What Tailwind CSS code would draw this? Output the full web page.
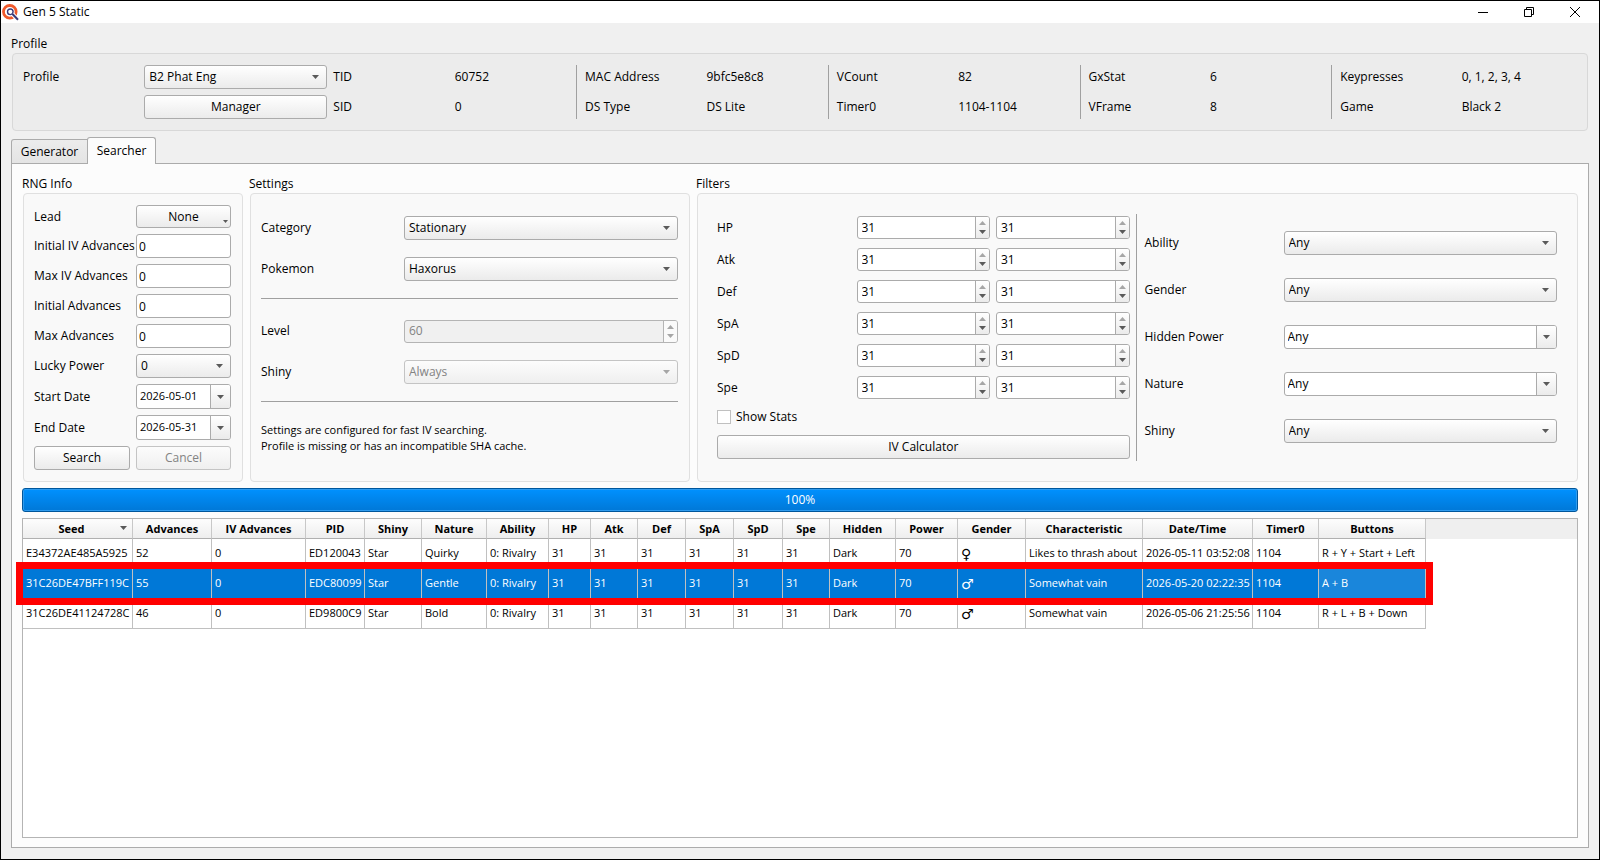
<!DOCTYPE html>
<html lang="en">
<head>
  <meta charset="UTF-8" />
  <meta name="viewport" content="width=device-width, initial-scale=1.0" />
  <title>Gen 5 Static</title>
  <script src="https://cdn.jsdelivr.net/npm/@tailwindcss/browser@4"></script>
</head>
<body class="min-h-screen flex flex-col bg-[#f0f0f0] border border-black font-['Open_Sans','Noto_Sans',sans-serif] text-xs text-black">
  <!-- Title bar -->
  <header class="flex items-center h-[22px] bg-white pl-px pr-px">
    <svg class="w-[17px] h-[17px]" viewBox="0 0 17 17" fill="none">
      <circle cx="7.8" cy="7.8" r="6.3" fill="#fff" stroke="#f0592b" stroke-width="2.8" />
      <circle cx="8.3" cy="7.8" r="2.8" fill="#fff" stroke="#3b3a78" stroke-width="1.4" />
      <path d="M10.4 10l5.6 5.8" stroke="#fff" stroke-width="4" />
      <path d="M10.2 9.8l5.8 6" stroke="#3b3a78" stroke-width="2" />
    </svg>
    <h1 class="ml-1">Gen 5 Static</h1>
    <div class="ml-auto flex">
      <button aria-label="Minimize" class="w-[46px] h-[22px] flex justify-center items-center">
        <svg class="w-[10px] h-[10px]" viewBox="0 0 10 10" stroke="#000"><path d="M0 5.5h10" /></svg>
      </button>
      <button aria-label="Restore" class="w-[46px] h-[22px] flex justify-center items-center">
        <svg class="w-[10px] h-[10px]" viewBox="0 0 10 10" fill="none" stroke="#000"><path d="M.5 2.5h7v7h-7zM2.5 2.5v-2h7v7h-2" /></svg>
      </button>
      <button aria-label="Close" class="w-[46px] h-[22px] flex justify-center items-center">
        <svg class="w-[10px] h-[10px]" viewBox="0 0 10 10" stroke="#000"><path d="M0 0l10 10M10 0L0 10" /></svg>
      </button>
    </div>
  </header>

  <main class="flex-1 flex flex-col px-[10px] pt-3 pb-[11px]">
    <!-- Profile -->
    <h2 class="h-[18px] leading-[18px]">Profile</h2>
    <section class="grid grid-cols-[1fr_183px_1fr_1fr_3px_1fr_1fr_3px_1fr_1fr_3px_1fr_1fr_3px_1fr_1fr] grid-rows-[24px_24px] gap-[6px] items-center mx-px bg-[#ececec] border border-[#d8d8d8] rounded-sm px-[10px] py-[11px]">
      <label for="profile">Profile</label>
      <div class="relative">
        <select id="profile" class="appearance-none w-full h-6 pl-1 rounded-[3px] border border-[#ababab] bg-linear-to-b from-white to-[#ebebeb]"><option>B2 Phat Eng</option></select>
        <svg class="absolute right-2 top-[10px] w-[7px] h-1 pointer-events-none" viewBox="0 0 7 4"><path d="M0 0h7L3.5 4z" fill="#5a5a5a" /></svg>
      </div>
      <span>TID</span><span>60752</span>
      <div class="row-span-2 h-full border-l border-[#a0a0a0]"></div>
      <span>MAC Address</span><span>9bfc5e8c8</span>
      <div class="row-span-2 h-full border-l border-[#a0a0a0]"></div>
      <span>VCount</span><span>82</span>
      <div class="row-span-2 h-full border-l border-[#a0a0a0]"></div>
      <span>GxStat</span><span>6</span>
      <div class="row-span-2 h-full border-l border-[#a0a0a0]"></div>
      <span>Keypresses</span><span>0, 1, 2, 3, 4</span>

      <button class="col-start-2 h-6 rounded-[3px] border border-[#ababab] bg-linear-to-b from-white to-[#ebebeb]">Manager</button>
      <span>SID</span><span>0</span>
      <span>DS Type</span><span>DS Lite</span>
      <span>Timer0</span><span>1104-1104</span>
      <span>VFrame</span><span>8</span>
      <span>Game</span><span>Black 2</span>
    </section>

    <!-- Tabs -->
    <div role="tablist" class="flex items-end mt-[6px] h-[26px]">
      <button role="tab" class="h-6 w-[77px] border border-b-0 border-[#ababab] rounded-tl-[3px] bg-linear-to-b from-[#ececec] to-[#e4e4e4]">Generator</button>
      <button role="tab" aria-selected="true" class="relative z-10 h-[27px] w-[69px] -mb-px -ml-px border border-b-0 border-[#ababab] rounded-t-[3px] bg-[#fcfcfc]">Searcher</button>
    </div>

    <section class="flex-1 flex flex-col bg-[#fcfcfc] border border-[#ababab] px-[10px] pt-[10px] pb-[9px]">
      <div class="grid grid-cols-[221px_1fr_2fr] gap-x-[6px]">
        <!-- RNG Info -->
        <div class="flex flex-col">
          <h2 class="h-[19px] leading-[19px]">RNG Info</h2>
          <div class="flex-1 grid grid-cols-[96px_95px] content-start gap-[6px] items-center ml-px bg-[#f9f9f9] border border-[#e0e0e0] rounded-sm pl-[10px] py-[11px]">
            <label for="lead">Lead</label>
            <button id="lead" class="relative h-[23px] rounded-[3px] border border-[#ababab] bg-linear-to-b from-white to-[#ebebeb]">
              None
              <svg class="absolute right-[2px] bottom-1 w-[5px] h-[3px]" viewBox="0 0 5 3"><path d="M0 0h5L2.5 3z" fill="#5a5a5a" /></svg>
            </button>
            <label for="initial-iv" class="whitespace-nowrap">Initial IV Advances</label>
            <input id="initial-iv" type="text" value="0" class="w-full h-6 px-[2px] rounded-[3px] border border-[#ababab] bg-white">
            <label for="max-iv" class="whitespace-nowrap">Max IV Advances</label>
            <input id="max-iv" type="text" value="0" class="w-full h-6 px-[2px] rounded-[3px] border border-[#ababab] bg-white">
            <label for="initial-adv">Initial Advances</label>
            <input id="initial-adv" type="text" value="0" class="w-full h-6 px-[2px] rounded-[3px] border border-[#ababab] bg-white">
            <label for="max-adv">Max Advances</label>
            <input id="max-adv" type="text" value="0" class="w-full h-6 px-[2px] rounded-[3px] border border-[#ababab] bg-white">
            <label for="lucky">Lucky Power</label>
            <div class="relative">
              <select id="lucky" class="appearance-none w-full h-6 pl-1 rounded-[3px] border border-[#ababab] bg-linear-to-b from-white to-[#ebebeb]"><option>0</option></select>
              <svg class="absolute right-2 top-[10px] w-[7px] h-1 pointer-events-none" viewBox="0 0 7 4"><path d="M0 0h7L3.5 4z" fill="#5a5a5a" /></svg>
            </div>
            <label for="start-date">Start Date</label>
            <div class="flex h-[25px] rounded-[3px] border border-[#ababab] bg-white overflow-hidden">
              <input id="start-date" type="text" value="2026-05-01" class="flex-1 min-w-0 pl-[3px] text-[11px]">
              <button aria-label="Pick start date" class="w-5 flex justify-center items-center border-l border-[#ababab] bg-linear-to-b from-white to-[#ebebeb]">
                <svg class="w-[7px] h-1" viewBox="0 0 7 4"><path d="M0 0h7L3.5 4z" fill="#5a5a5a" /></svg>
              </button>
            </div>
            <label for="end-date">End Date</label>
            <div class="flex h-[25px] rounded-[3px] border border-[#ababab] bg-white overflow-hidden">
              <input id="end-date" type="text" value="2026-05-31" class="flex-1 min-w-0 pl-[3px] text-[11px]">
              <button aria-label="Pick end date" class="w-5 flex justify-center items-center border-l border-[#ababab] bg-linear-to-b from-white to-[#ebebeb]">
                <svg class="w-[7px] h-1" viewBox="0 0 7 4"><path d="M0 0h7L3.5 4z" fill="#5a5a5a" /></svg>
              </button>
            </div>
            <button class="h-6 rounded-[3px] border border-[#ababab] bg-linear-to-b from-white to-[#ebebeb]">Search</button>
            <button disabled class="h-6 rounded-[3px] border border-[#c4c4c4] bg-linear-to-b from-[#fcfcfc] to-[#efefef] text-[#838383]">Cancel</button>
          </div>
        </div>

        <!-- Settings -->
        <div class="flex flex-col">
          <h2 class="h-[19px] leading-[19px]">Settings</h2>
          <div class="flex-1 flex flex-col gap-[17px] ml-px bg-[#f9f9f9] border border-[#e0e0e0] rounded-sm pl-[10px] pr-[11px] pt-[22px]">
            <div class="grid grid-cols-[1fr_2fr] gap-[6px] items-center">
              <label for="category">Category</label>
              <div class="relative">
                <select id="category" class="appearance-none w-full h-6 pl-1 rounded-[3px] border border-[#ababab] bg-linear-to-b from-white to-[#ebebeb]"><option>Stationary</option></select>
                <svg class="absolute right-2 top-[10px] w-[7px] h-1 pointer-events-none" viewBox="0 0 7 4"><path d="M0 0h7L3.5 4z" fill="#5a5a5a" /></svg>
              </div>
            </div>
            <div class="grid grid-cols-[1fr_2fr] gap-[6px] items-center">
              <label for="pokemon">Pokemon</label>
              <div class="relative">
                <select id="pokemon" class="appearance-none w-full h-6 pl-1 rounded-[3px] border border-[#ababab] bg-linear-to-b from-white to-[#ebebeb]"><option>Haxorus</option></select>
                <svg class="absolute right-2 top-[10px] w-[7px] h-1 pointer-events-none" viewBox="0 0 7 4"><path d="M0 0h7L3.5 4z" fill="#5a5a5a" /></svg>
              </div>
            </div>
            <hr class="h-1 border-[#a0a0a0]">
            <div class="h-6 grid grid-cols-[1fr_2fr] gap-[6px] items-center">
              <label for="level">Level</label>
              <div class="flex h-[23px] rounded-[3px] border border-[#b4b4b4] bg-[#f0f0f0] overflow-hidden">
                <input id="level" type="number" value="60" disabled class="flex-1 min-w-0 pl-1 text-[#838383] [appearance:textfield]">
                <div class="w-[14px] flex flex-col justify-center items-center gap-[5px] border-l border-[#b4b4b4] bg-[#fafafa]">
                  <svg class="w-[7px] h-1" viewBox="0 0 7 4"><path d="M0 4h7L3.5 0z" fill="#a6a6a6" /></svg>
                  <svg class="w-[7px] h-1" viewBox="0 0 7 4"><path d="M0 0h7L3.5 4z" fill="#a6a6a6" /></svg>
                </div>
              </div>
            </div>
            <div class="grid grid-cols-[1fr_2fr] gap-[6px] items-center">
              <label for="set-shiny">Shiny</label>
              <div class="relative">
                <select id="set-shiny" disabled class="appearance-none w-full h-6 pl-1 rounded-[3px] border border-[#c4c4c4] bg-linear-to-b from-[#fcfcfc] to-[#efefef] text-[#838383] opacity-100"><option>Always</option></select>
                <svg class="absolute right-2 top-[10px] w-[7px] h-1 pointer-events-none" viewBox="0 0 7 4"><path d="M0 0h7L3.5 4z" fill="#a6a6a6" /></svg>
              </div>
            </div>
            <hr class="h-1 border-[#a0a0a0]">
            <p class="text-[11px] leading-4">Settings are configured for fast IV searching.<br>Profile is missing or has an incompatible SHA cache.</p>
          </div>
        </div>

        <!-- Filters -->
        <div class="flex flex-col">
          <h2 class="h-[19px] leading-[19px]">Filters</h2>
          <div class="flex-1 grid grid-cols-[1fr_3px_1fr] gap-[6px] items-start ml-px bg-[#f9f9f9] border border-[#e0e0e0] rounded-sm pl-[19px] pr-5 py-5">
            <div class="flex flex-col pt-[2px]">
              <div id="stats" class="flex flex-col gap-[9px]"></div>
              <label class="flex items-center gap-[5px] h-[18px] mt-[9px]">
                <input type="checkbox" class="appearance-none w-[14px] h-[14px] border border-[#c0c0c0] bg-white">
                Show Stats
              </label>
              <button class="h-6 mt-[9px] rounded-[3px] border border-[#ababab] bg-linear-to-b from-white to-[#ebebeb]">IV Calculator</button>
            </div>
            <div class="h-full border-l border-[#a0a0a0]"></div>
            <div class="flex flex-col gap-[23px] pt-[17px]">
              <div class="grid grid-cols-[133px_1fr] gap-[6px] items-center">
                <label for="ability">Ability</label>
                <div class="relative">
                  <select id="ability" class="appearance-none w-full h-6 pl-1 rounded-[3px] border border-[#ababab] bg-linear-to-b from-white to-[#ebebeb]"><option>Any</option></select>
                  <svg class="absolute right-2 top-[10px] w-[7px] h-1 pointer-events-none" viewBox="0 0 7 4"><path d="M0 0h7L3.5 4z" fill="#5a5a5a" /></svg>
                </div>
              </div>
              <div class="grid grid-cols-[133px_1fr] gap-[6px] items-center">
                <label for="gender">Gender</label>
                <div class="relative">
                  <select id="gender" class="appearance-none w-full h-6 pl-1 rounded-[3px] border border-[#ababab] bg-linear-to-b from-white to-[#ebebeb]"><option>Any</option></select>
                  <svg class="absolute right-2 top-[10px] w-[7px] h-1 pointer-events-none" viewBox="0 0 7 4"><path d="M0 0h7L3.5 4z" fill="#5a5a5a" /></svg>
                </div>
              </div>
              <div class="grid grid-cols-[133px_1fr] gap-[6px] items-center">
                <label for="hidden-power">Hidden Power</label>
                <div class="flex h-6 rounded-[3px] border border-[#ababab] bg-white overflow-hidden">
                  <input id="hidden-power" type="text" value="Any" class="flex-1 min-w-0 pl-[3px]">
                  <button aria-label="Open hidden power list" class="w-5 flex justify-center items-center border-l border-[#ababab] bg-linear-to-b from-white to-[#ebebeb]">
                    <svg class="w-[7px] h-1" viewBox="0 0 7 4"><path d="M0 0h7L3.5 4z" fill="#5a5a5a" /></svg>
                  </button>
                </div>
              </div>
              <div class="grid grid-cols-[133px_1fr] gap-[6px] items-center">
                <label for="nature">Nature</label>
                <div class="flex h-6 rounded-[3px] border border-[#ababab] bg-white overflow-hidden">
                  <input id="nature" type="text" value="Any" class="flex-1 min-w-0 pl-[3px]">
                  <button aria-label="Open nature list" class="w-5 flex justify-center items-center border-l border-[#ababab] bg-linear-to-b from-white to-[#ebebeb]">
                    <svg class="w-[7px] h-1" viewBox="0 0 7 4"><path d="M0 0h7L3.5 4z" fill="#5a5a5a" /></svg>
                  </button>
                </div>
              </div>
              <div class="grid grid-cols-[133px_1fr] gap-[6px] items-center">
                <label for="shiny">Shiny</label>
                <div class="relative">
                  <select id="shiny" class="appearance-none w-full h-6 pl-1 rounded-[3px] border border-[#ababab] bg-linear-to-b from-white to-[#ebebeb]"><option>Any</option></select>
                  <svg class="absolute right-2 top-[10px] w-[7px] h-1 pointer-events-none" viewBox="0 0 7 4"><path d="M0 0h7L3.5 4z" fill="#5a5a5a" /></svg>
                </div>
              </div>
            </div>
          </div>
        </div>
      </div>

      <!-- Progress -->
      <div role="progressbar" aria-valuenow="100" class="h-6 mt-[6px] flex justify-center items-center rounded-[3px] border border-[#00569b] bg-linear-to-b from-[#0091ff] to-[#0078d7] inset-ring inset-ring-[#2f9bee] text-white">100%</div>

      <!-- Results -->
      <div class="flex-1 mt-[6px] border border-[#b4b4b4] bg-[linear-gradient(#efefef_20px,#ffffff_20px)]">
        <div class="relative w-[1403px]">
          <table class="table-fixed w-full border-separate border-spacing-0 text-[11px]">
            <colgroup id="cols"></colgroup>
            <thead><tr id="head"></tr></thead>
            <tbody id="results"></tbody>
          </table>
          <!-- Marker around the selected row -->
          <div class="absolute -left-[7px] -right-[7px] top-[43px] h-[43px] border-[7px] border-[#ff0000] pointer-events-none"></div>
        </div>
      </div>
    </section>
  </main>

  <script>
    const spin = (id, label) => `
      <div class="flex h-[23px] rounded-[3px] border border-[#ababab] bg-white overflow-hidden">
        <input id="${id}" aria-label="${label}" type="number" value="31" class="flex-1 min-w-0 pl-1 [appearance:textfield]">
        <div class="w-[14px] flex flex-col justify-center items-center gap-[5px] border-l border-[#ababab] bg-linear-to-b from-white to-[#ebebeb]">
          <svg class="w-[7px] h-1" viewBox="0 0 7 4"><path d="M0 4h7L3.5 0z" fill="#a6a6a6" /></svg>
          <svg class="w-[7px] h-1" viewBox="0 0 7 4"><path d="M0 0h7L3.5 4z" fill="#5a5a5a" /></svg>
        </div>
      </div>`;

    document.getElementById('stats').innerHTML = ['HP', 'Atk', 'Def', 'SpA', 'SpD', 'Spe'].map(stat => `
      <div class="grid grid-cols-3 gap-[6px] items-center">
        <label for="${stat}-min">${stat}</label>
        ${spin(stat + '-min', stat + ' min')}
        ${spin(stat + '-max', stat + ' max')}
      </div>`).join('');

    const columns = [
      ['Seed', 110], ['Advances', 79], ['IV Advances', 94], ['PID', 59], ['Shiny', 57],
      ['Nature', 65], ['Ability', 62], ['HP', 42], ['Atk', 47], ['Def', 48],
      ['SpA', 48], ['SpD', 49], ['Spe', 47], ['Hidden', 66], ['Power', 62],
      ['Gender', 68], ['Characteristic', 117], ['Date/Time', 110], ['Timer0', 66], ['Buttons', 107],
    ];

    const results = [
      ['E34372AE485A5925', '52', '0', 'ED120043', 'Star', 'Quirky', '0: Rivalry', '31', '31', '31', '31', '31', '31', 'Dark', '70', '♀', 'Likes to thrash about', '2026-05-11 03:52:08', '1104', 'R + Y + Start + Left'],
      ['31C26DE47BFF119C', '55', '0', 'EDC80099', 'Star', 'Gentle', '0: Rivalry', '31', '31', '31', '31', '31', '31', 'Dark', '70', '♂', 'Somewhat vain', '2026-05-20 02:22:35', '1104', 'A + B'],
      ['31C26DE41124728C', '46', '0', 'ED9800C9', 'Star', 'Bold', '0: Rivalry', '31', '31', '31', '31', '31', '31', 'Dark', '70', '♂', 'Somewhat vain', '2026-05-06 21:25:56', '1104', 'R + L + B + Down'],
    ];
    const selected = 1;
    const genderCol = 15;

    document.getElementById('cols').innerHTML = columns.map(([, width]) => `<col style="width:${width}px">`).join('');

    document.getElementById('head').innerHTML = columns.map(([name], i) => `
      <th class="relative h-5 p-0 ${i === 0 ? 'pr-3' : ''} border-r border-b border-r-[#c8c8c8] border-b-[#b0b0b0] bg-linear-to-b from-[#fdfdfd] to-[#eeeeee] font-bold leading-[19px]">
        ${name}
        ${i === 0 ? '<svg class="absolute right-[5px] top-[7px] w-[7px] h-1" viewBox="0 0 7 4"><path d="M0 0h7L3.5 4z" fill="#5a5a5a" /></svg>' : ''}
      </th>`).join('');

    document.getElementById('results').innerHTML = results.map((row, r) => `
      <tr class="${r === selected ? 'bg-[#0078d7] text-white' : 'bg-white'}">
        ${row.map((cell, c) => `<td class="h-[30px] p-0 pl-[3px] border-r border-b border-[#c0c0c0] whitespace-nowrap ${c === genderCol ? "font-['DejaVu_Sans'] text-sm leading-none" : ''} ${r === selected && c === row.length - 1 ? 'bg-[#1a86db]' : ''}">${cell}</td>`).join('')}
      </tr>`).join('');
  </script>
</body>
</html>
